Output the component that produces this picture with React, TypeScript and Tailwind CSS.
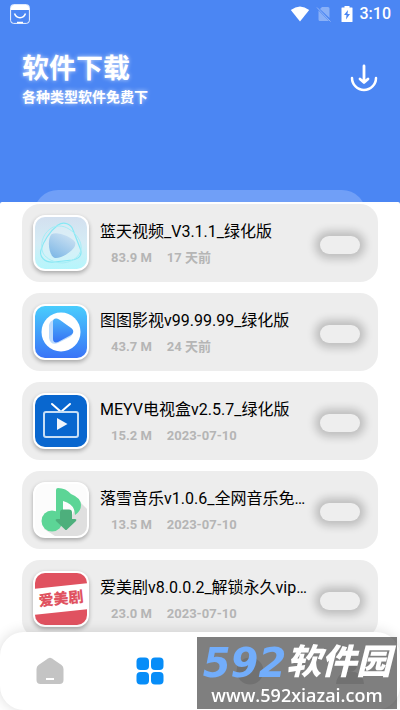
import { FC, ReactNode } from "react";

interface AppItem {
  name: string;
  size: string;
  date: string;
  icon: ReactNode;
}

const SkyIcon = () => (
  <svg viewBox="0 0 52 52" className="size-full">
    <defs>
      <linearGradient id="sky-bg" x1="0" y1="0" x2="0" y2="1">
        <stop offset="0" stopColor="#d3e0ef" />
        <stop offset="0.5" stopColor="#d5ecf5" />
        <stop offset="1" stopColor="#b5f6fc" />
      </linearGradient>
      <linearGradient id="sky-play" x1="0.8" y1="0" x2="0.2" y2="1">
        <stop offset="0" stopColor="#cfe3f3" />
        <stop offset="1" stopColor="#7fb8e6" />
      </linearGradient>
    </defs>
    <rect width="52" height="52" fill="url(#sky-bg)" />
    <path
      d="M23 8c6-4 13-1 15 5l7 18c3 7-1 11-8 12l-18 2C10 46 4 40 6 33c2-8 9-19 17-25Z"
      fill="#e4f5fb"
      fillOpacity="0.4"
      stroke="#86e8f4"
      strokeWidth="1.2"
    />
    <path
      d="M15 12c5-4 13-4 19 0 8 5 13 13 12 20-1 8-9 13-18 14-8 0-17-4-20-10-3-8-1-18 7-24Z"
      fill="none"
      stroke="#a4edf6"
      strokeWidth="1"
    />
    <path
      d="M17 17c5-3 20 3 23 8 3 7-14 17-20 16-7-2-8-21-3-24Z"
      fill="url(#sky-play)"
    />
  </svg>
);

const TutuIcon = () => (
  <svg viewBox="0 0 52 52" className="size-full">
    <defs>
      <linearGradient id="tutu-bg" x1="0" y1="0" x2="0" y2="1">
        <stop offset="0" stopColor="#49cdfd" />
        <stop offset="1" stopColor="#3a74f7" />
      </linearGradient>
      <linearGradient id="tutu-play" x1="0" y1="0" x2="0" y2="1">
        <stop offset="0" stopColor="#4db4fb" />
        <stop offset="1" stopColor="#3573f4" />
      </linearGradient>
    </defs>
    <rect width="52" height="52" fill="url(#tutu-bg)" />
    <circle cx="26" cy="26" r="19.5" fill="#fff" />
    <path
      d="M14 19c1-4 4-6 8-5l13 7c4 3 4 7 0 10l-12 6c-5 2-8 0-9-5Z"
      fill="#8fc3fb"
      fillOpacity="0.6"
    />
    <path
      d="M18 15c1-3 3-3 7-1l11 8c3 2 3 5 0 7l-13 7c-3 1-5 0-5-3Z"
      fill="url(#tutu-play)"
    />
  </svg>
);

const TvIcon = () => (
  <svg viewBox="0 0 52 52" className="size-full">
    <rect width="52" height="52" fill="#0967cf" />
    <path
      d="m17 9 8 7M35 9l-8 7"
      stroke="#fff"
      strokeWidth="2"
      strokeLinecap="round"
    />
    <rect
      x="9"
      y="17"
      width="34"
      height="25"
      rx="2"
      fill="none"
      stroke="#c7def5"
      strokeWidth="2"
    />
    <path d="M22 23v12l10.500-6Z" fill="#f1f6fc" />
  </svg>
);

const MusicIcon = () => (
  <svg viewBox="0 0 52 52" className="size-full">
    <rect width="52" height="52" fill="#fcfcfc" />
    <path d="M44 17 52 25v27H20L9 45l26-10Z" fill="#dfdfdf" />
    <circle cx="17" cy="37" r="10.5" fill="#5cd596" />
    <path
      d="M21 6q0-2 2-2 8 0 13 6 10 4 10 11 0 6-6 10 0-11-12-14v20h-7Z"
      fill="#5cd596"
    />
    <path
      d="M28 25.500h6q3 0 3 3V35h3q2 0 1 2l-9 8.500q-1 1-2 0L21 37q-1-2 1-2h3v-6.500q0-3 3-3Z"
      fill="#4daf7c"
    />
  </svg>
);

const DramaIcon = () => (
  <div className="flex size-full items-center bg-[#e05260]">
    <span className="-mx-1 flex-1 -rotate-6 bg-white py-1 text-center text-[15px] leading-[18px] font-black text-[#e05260]">
      爱美剧
    </span>
  </div>
);

const apps: AppItem[] = [
  {
    name: "篮天视频_V3.1.1_绿化版",
    size: "83.9 M",
    date: "17 天前",
    icon: <SkyIcon />,
  },
  {
    name: "图图影视v99.99.99_绿化版",
    size: "43.7 M",
    date: "24 天前",
    icon: <TutuIcon />,
  },
  {
    name: "MEYV电视盒v2.5.7_绿化版",
    size: "15.2 M",
    date: "2023-07-10",
    icon: <TvIcon />,
  },
  {
    name: "落雪音乐v1.0.6_全网音乐免…",
    size: "13.5 M",
    date: "2023-07-10",
    icon: <MusicIcon />,
  },
  {
    name: "爱美剧v8.0.0.2_解锁永久vip…",
    size: "23.0 M",
    date: "2023-07-10",
    icon: <DramaIcon />,
  },
];

const StatusBar = () => (
  <div className="flex h-7 items-center pr-[9px] pl-[10px] text-white">
    <svg viewBox="0 0 20 20" className="size-5" fill="none">
      <rect x="0.6" y="0.6" width="18.8" height="18.8" rx="3" stroke="#fff" strokeOpacity="0.9" />
      <path d="M1 6V3.500Q1 1 3.500 1h13Q19 1 19 3.500V6Z" fill="#fff" />
      <path d="M4.500 9.500c2 5.500 9 5.500 11 0" stroke="#fff" strokeWidth="1.500" />
      <path d="M7 18.500h6" stroke="#fff" strokeWidth="1.500" />
    </svg>
    <svg viewBox="0 0 20 16" className="ml-auto h-4 w-5" fill="#fff">
      <path d="M.8 4Q10-3.200 19.200 4L10 15.500Z" />
    </svg>
    <svg viewBox="0 0 16 16" className="ml-[6px] size-4">
      <path d="M6 1h6q1.500 0 1.500 1.500V12L4 3ZM2.500 4.500 13 15H4q-1.500 0-1.500-1.500Z" fill="#fff" fillOpacity="0.35" />
      <path d="m1 1.500 13.500 14" stroke="#fff" strokeOpacity="0.4" />
    </svg>
    <svg viewBox="0 0 12 18" className="ml-[9px] h-[18px] w-3">
      <path d="M3.500 1h5v1.500H11q.5 0 .5.500v13.500q0 .5-.5.500H1q-.5 0-.5-.5V3q0-.5.5-.5h2.500Z" fill="#fff" />
      <path d="m7 5-4 5h2.500L5 14.500 9 9H6.500Z" fill="#4b86f3" />
    </svg>
    <span className="ml-[7px] text-base leading-5 font-medium">3:10</span>
  </div>
);

const AppCard: FC<{ app: AppItem }> = ({ app }) => (
  <li className="flex h-[78px] items-center rounded-[18px] bg-[#ededed] pr-[18px] pl-[11px]">
    <div className="size-14 shrink-0 rounded-[12px] bg-white p-[2px] shadow-[0_2px_4px_rgba(0,0,0,0.3)]">
      <div className="size-full overflow-hidden rounded-[10px]">{app.icon}</div>
    </div>
    <div className="ml-[11px] min-w-0 flex-1">
      <h2 className="truncate text-base leading-6 text-black">{app.name}</h2>
      <p className="mt-[6px] flex gap-[15px] pl-[11px] text-[13px] leading-4 font-bold text-[#b5b5b5]">
        <span>{app.size}</span>
        <span>{app.date}</span>
      </p>
    </div>
    <button
      aria-label={app.name}
      className="ml-[7px] mt-1 h-[18px] w-10 shrink-0 rounded-full bg-[#eeeeee] shadow-[0_0_9px_5px_rgba(0,0,0,0.2)]"
    />
  </li>
);

const NavBar = () => (
  <nav className="fixed inset-x-0 bottom-0 grid h-[78px] grid-cols-4 rounded-3xl bg-white shadow-[0_0_14px_rgba(0,0,0,0.14)]">
    <a href="#home" aria-label="首页" className="flex items-center justify-center">
      <svg viewBox="0 0 28 28" className="size-7">
        <path
          d="M12 1.500q2-1.300 4 0l9.500 6.500q2 1.500 2 4v11q0 4-4 4h-19q-4 0-4-4V12q0-2.500 2-4Z"
          fill="#c4c4c4"
        />
        <path d="M10 22h8" stroke="#fff" strokeWidth="2" />
      </svg>
    </a>
    <a href="#apps" aria-label="软件" className="flex items-center justify-center">
      <svg viewBox="0 0 28 28" className="size-7" fill="#078df8">
        <rect x="0.500" y="0.500" width="12.500" height="12.500" rx="4" />
        <rect x="15" y="0.500" width="12.500" height="12.500" rx="4" />
        <rect x="0.500" y="15" width="12.500" height="12.500" rx="4" />
        <rect x="15" y="15" width="12.500" height="12.500" rx="4" />
      </svg>
    </a>
    <a href="#discover" aria-label="发现" className="flex items-center justify-center">
      <svg viewBox="0 0 28 28" className="size-7" fill="#e2e2e2">
        <circle cx="14" cy="14" r="13.500" />
      </svg>
    </a>
    <a href="#mine" aria-label="我的" className="flex items-center justify-center">
      <svg viewBox="0 0 28 28" className="size-7" fill="#e2e2e2">
        <circle cx="14" cy="8" r="7" />
        <path d="M0 27q1-10 9-12h10q8 2 9 12Z" />
      </svg>
    </a>
  </nav>
);

const Watermark = () => (
  <div className="fixed right-[3px] bottom-px flex h-[72px] w-[200px] flex-col items-center overflow-hidden bg-black/50 whitespace-nowrap text-white">
    <div className="mt-[6px] flex h-10 items-center italic">
      <span className="font-['DejaVu_Sans'] text-[40px] leading-10 font-bold text-[#72adfb]">
        592
      </span>
      <span className="text-[35px] leading-10 font-black">软件园</span>
    </div>
    <span className="mt-[2px] font-['Open_Sans'] text-lg leading-5 font-semibold">
      www.592xiazai.com
    </span>
  </div>
);

export default function App() {
  return (
    <div className="flex h-screen flex-col overflow-hidden bg-[#4b86f3] font-[Roboto,'Noto_Sans_CJK_SC',sans-serif]">
      <StatusBar />
      <header className="flex items-start justify-between px-[22px] pt-6 text-white">
        <div className="pt-px [text-shadow:0_0_4px_rgba(255,255,255,0.7)]">
          <h1 className="text-[27px] leading-8 font-bold">软件下载</h1>
          <p className="mt-[3px] text-sm leading-[18px] font-bold">
            各种类型软件免费下
          </p>
        </div>
        <button aria-label="下载" className="mt-3">
          <svg viewBox="0 0 28 28" className="size-7" fill="none" stroke="#fff" strokeLinecap="round" strokeLinejoin="round">
            <path d="M2 14a12 12 0 0 0 24 0" strokeWidth="2.500" />
            <path d="M14 2v16M10 15 14 18.500l4-3.500" strokeWidth="2.800" />
          </svg>
        </button>
      </header>
      <div className="mt-[84px] h-3 shrink-0 overflow-hidden px-[34px]">
        <div className="h-12 rounded-3xl bg-[#709ff7]" />
      </div>
      <main className="min-h-0 flex-1 overflow-hidden rounded-t-[2px] bg-white px-[22px] pt-[2px]">
        <ul className="flex flex-col gap-[11px]">
          {apps.map((app) => (
            <AppCard key={app.name} app={app} />
          ))}
        </ul>
      </main>
      <NavBar />
      <Watermark />
    </div>
  );
}
